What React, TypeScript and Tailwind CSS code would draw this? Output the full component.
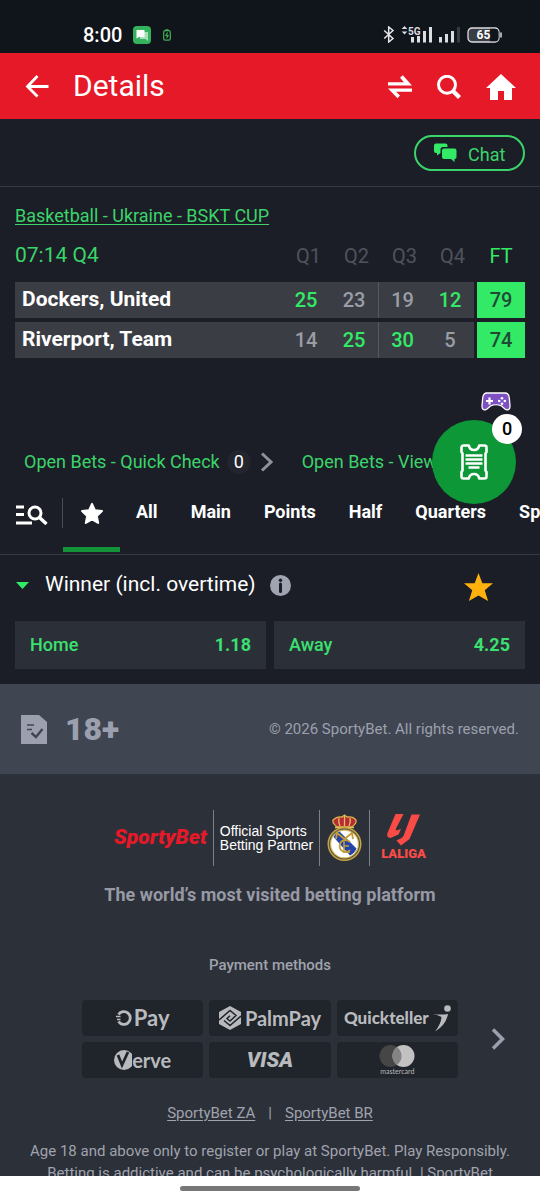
import type { ReactNode } from "react";

interface TeamScore {
  name: string;
  quarters: number[];
  best: boolean[];
  total: number;
}

const QUARTERS = ["Q1", "Q2", "Q3", "Q4"];

const TEAMS: TeamScore[] = [
  { name: "Dockers, United", quarters: [25, 23, 19, 12], best: [true, false, false, true], total: 79 },
  { name: "Riverport, Team", quarters: [14, 25, 30, 5], best: [false, true, true, false], total: 74 },
];

const MARKET_TABS = ["All", "Main", "Points", "Half", "Quarters", "Special"];

const ODDS = [
  { label: "Home", price: "1.18" },
  { label: "Away", price: "4.25" },
];

function StatusBar() {
  return (
    <div className="flex h-[53px] shrink-0 items-center justify-between bg-[#10141b] pt-4 pr-[38px] pl-[83px] text-white">
      <div className="flex items-center">
        <span className="text-xl font-medium">8:00</span>
        <svg className="ml-[11px] size-[18px]" viewBox="0 0 18 18">
          <rect width="18" height="18" rx="4" fill="#35b35c" />
          <path d="M7 6h8v9l-2.500-2H7z" fill="#a9dfb8" />
          <path d="M3.500 4h8v7H6l-2.500 1.500z" fill="#fff" />
        </svg>
        <svg className="ml-3 h-3 w-2" viewBox="0 0 8 12" fill="none" stroke="#43b055" strokeWidth="1.200">
          <path d="M2.500 .8h3" />
          <rect x=".7" y="1.700" width="6.600" height="9.500" rx="1.500" />
          <path d="M4.600 3.500L3 6.500h2L3.600 9" />
        </svg>
      </div>
      <div className="flex items-center">
        <svg className="h-[17px] w-3" viewBox="0 0 12 17" fill="none" stroke="#e6e7ea" strokeWidth="1.500">
          <path d="M1.200 4.500l8.800 8-4.300 3.500V1L10 4.500l-8.800 8" />
        </svg>
        <svg className="ml-[6px] h-[17px] w-[34px]" viewBox="0 0 34 17" fill="#dcdde0">
          <path d="M3.500 0l2.800 3H.700zM3.500 8.500l-2.800-3h5.600z" />
          <text x="7" y="8.500" fontSize="10" fontWeight="700" fontFamily="Roboto, sans-serif">5G</text>
          <rect x="10" y="11" width="3" height="5.500" />
          <rect x="16" y="10" width="3" height="6.500" />
          <rect x="22" y="5" width="3" height="11.500" />
          <rect x="28" y="1" width="3" height="15.500" />
        </svg>
        <svg className="ml-[3px] h-[17px] w-[24px]" viewBox="0 0 24 17" fill="#dcdde0">
          <rect x="1" y="11" width="3" height="5.500" />
          <rect x="7" y="8" width="3" height="8.500" />
          <rect x="13" y="5" width="3" height="11.500" />
          <rect x="19" y="1" width="3" height="15.500" fill="#373b42" />
        </svg>
        <svg className="ml-[5px] h-4 w-[35px]" viewBox="0 0 35 16">
          <rect x="1" y="1" width="31" height="14" rx="4" fill="#3a3d44" stroke="#dcdde0" strokeWidth="1.300" />
          <path d="M23 1.700h5a3.500 3.500 0 013.500 3.500v5.600a3.500 3.500 0 01-3.500 3.500h-5z" fill="#10141b" />
          <path d="M34 5.500v5" stroke="#dcdde0" strokeWidth="1.500" />
          <text x="16.500" y="12.400" fontSize="12" fontWeight="700" textAnchor="middle" fill="#fff" fontFamily="Roboto, sans-serif">65</text>
        </svg>
      </div>
    </div>
  );
}

function Header() {
  return (
    <header className="flex h-[66px] shrink-0 items-center bg-[#e51928] pr-6 pl-[25px] text-white">
      <button type="button" aria-label="Back">
        <svg className="h-6 w-6" viewBox="0 0 24 24" fill="none" stroke="currentColor" strokeWidth="2.800">
          <path d="M23.500 12.500H3M12.500 2L2.500 12.500l10 10" />
        </svg>
      </button>
      <h1 className="ml-6 text-[30px] leading-9">Details</h1>
      <div className="ml-auto flex items-center gap-[25px] pt-px">
        <button type="button" aria-label="Switch">
          <svg className="h-6 w-6" viewBox="0 0 24 24" fill="currentColor">
            <path d="M0 7.200h16l-4-4.400 2.800-2.600L24 10.500H0zM24 13.500H0l9.500 9.700 2.500-2.600-4-3.800h16z" />
          </svg>
        </button>
        <button type="button" aria-label="Search">
          <svg className="h-6 w-6" viewBox="0 0 24 24" fill="none" stroke="currentColor">
            <circle cx="10" cy="9.800" r="8.500" strokeWidth="3" />
            <path d="M15.500 15.500l7 7" strokeWidth="4.200" />
          </svg>
        </button>
        <button type="button" aria-label="Home">
          <svg className="h-[26px] w-[30px]" viewBox="0 0 30 26" fill="currentColor">
            <path d="M15 0L30 14h-4v12h-8v-9h-6v9H4V14H0z" />
          </svg>
        </button>
      </div>
    </header>
  );
}

function ChatBar() {
  return (
    <div className="flex h-[68px] items-center justify-end border-b border-[#353941] px-[15px]">
      <button
        type="button"
        className="flex h-9 w-[111px] items-center rounded-full border-2 border-[#3bd46a] pt-1 pl-[18px] text-lg text-[#3bd46a]"
      >
        <svg className="mr-[11px] mb-1 h-[19px] w-[23px]" viewBox="0 0 23 19" fill="#32ea66">
          <path d="M2 .5h9.500a2 2 0 012 2V4H9a2.500 2.500 0 00-2.500 2.500V10L3 12.500V10H2a2 2 0 01-2-2V2.500a2 2 0 012-2z" />
          <path d="M10 5.500h10.500a2 2 0 012 2V14a2 2 0 01-2 2v3L17 16h-7a2 2 0 01-2-2V7.500a2 2 0 012-2z" />
        </svg>
        Chat
      </button>
    </div>
  );
}

function Scoreboard() {
  return (
    <section className="px-[15px] pt-[15px]">
      <a href="#league" className="block text-lg leading-7 text-[#3bd46a] underline underline-offset-2">
        Basketball - Ukraine - BSKT CUP
      </a>
      <table className="w-full table-fixed border-separate border-spacing-x-0 border-spacing-y-1 text-xl">
        <thead>
          <tr className="h-11 text-[#50535b]">
            <th className="text-left text-[21px] font-normal text-[#3bd46a]">07:14 Q4</th>
            {QUARTERS.map((q) => (
              <th key={q} className="w-12 pl-[5px] font-normal">{q}</th>
            ))}
            <th className="w-[51px] pl-[3px] font-normal text-[#32ea66]">FT</th>
          </tr>
        </thead>
        <tbody>
          {TEAMS.map((team) => (
            <tr key={team.name} className="h-9 text-center font-medium">
              <th className="bg-[#3b3d44] pl-[7px] text-left text-[21px] font-bold text-white">{team.name}</th>
              {team.quarters.map((score, i) => (
                <td
                  key={i}
                  className={`bg-[#3b3d44] ${team.best[i] ? "text-[#32ea66]" : "text-[#9a9da6]"} ${
                    i === 2 ? "border-l border-[#565961]" : ""
                  }`}
                >
                  {score}
                </td>
              ))}
              <td className="border-l-[3px] border-[#1b1e27] bg-[#32ea66] text-[#1f4a35]">{team.total}</td>
            </tr>
          ))}
        </tbody>
      </table>
    </section>
  );
}

function BetslipButton() {
  return (
    <div className="absolute top-[-40px] right-[18px] z-10 flex flex-col items-end">
      <svg className="mr-[11px] h-5 w-[30px]" viewBox="0 0 30 20">
        <path
          d="M6 1h18c3 0 4 2 4.300 5l.7 7.500c.3 4-2.500 5.500-5 3.500l-3.500-3c-3-1.500-8-1.500-11 0L6 17c-2.500 2-5.300.5-5-3.500L1.700 6C2 3 3 1 6 1z"
          fill="#7d50c4"
          stroke="#fff"
          strokeWidth="1.300"
        />
        <path d="M8.500 5.500v7M5 9h7" stroke="#fff" strokeWidth="2.200" />
        <g fill="#fff">
          <circle cx="21" cy="6.200" r="1.300" />
          <circle cx="21" cy="11.800" r="1.300" />
          <circle cx="18.200" cy="9" r="1.300" />
          <circle cx="23.800" cy="9" r="1.300" />
        </g>
      </svg>
      <button
        type="button"
        aria-label="Betslip"
        className="relative mt-2 mr-[6px] flex size-[84px] items-center justify-center rounded-full bg-[#0d9737]"
      >
        <svg className="h-9 w-7" viewBox="0 0 28 36" fill="none" stroke="#fff">
          <path
            d="M3.500 1.500h5.300c.6 3 2.600 4.500 5.200 4.500s4.600-1.500 5.200-4.500h5.300a2 2 0 012 2v4.500l-1 1.500v17l1 1.500v4.500a2 2 0 01-2 2h-5.300c-.6-3-2.600-4.500-5.200-4.500s-4.600 1.500-5.200 4.500H3.500a2 2 0 01-2-2V28l1-1.500v-17L1.500 8V3.500a2 2 0 012-2z"
            strokeWidth="2.600"
            strokeLinejoin="round"
          />
          <path d="M5.500 11.500h17M5.500 15.500h17M5.500 19.500h17M8.500 23.500h11" strokeWidth="2.400" />
        </svg>
        <span className="absolute -top-[6px] -right-[6px] flex size-[30px] items-center justify-center rounded-full bg-white text-lg font-medium text-black">
          0
        </span>
      </button>
    </div>
  );
}

function OpenBets() {
  return (
    <section className="relative mt-[70px]">
      <div className="flex h-[60px] items-center overflow-hidden pl-6 text-lg whitespace-nowrap text-[#3bd46a]">
        <a href="#quick-check">Open Bets - Quick Check</a>
        <span className="ml-[7px] flex size-6 items-center justify-center rounded-full bg-[#22252d] text-white">0</span>
        <svg className="ml-[9px] h-5 w-[14px] shrink-0" viewBox="0 0 14 20" fill="none" stroke="#8f929c" strokeWidth="3">
          <path d="M2 1.500L11 10l-9 8.500" />
        </svg>
        <a href="#open-bets" className="ml-7">Open Bets - View All</a>
      </div>
      <BetslipButton />
    </section>
  );
}

function MarketTabs() {
  return (
    <nav className="flex h-[63px] items-start overflow-hidden border-b border-[#353941] pl-4 text-lg font-bold whitespace-nowrap text-white">
      <button type="button" aria-label="Search markets" className="flex h-[46px] shrink-0 items-center">
        <svg className="h-5 w-8" viewBox="0 0 32 20" fill="none" stroke="currentColor" strokeWidth="3">
          <path d="M0 2h8M0 9.500h8M0 18h16" />
          <circle cx="19" cy="8" r="6" />
          <path d="M23.500 12.500l7 6.500" strokeWidth="3.400" />
        </svg>
      </button>
      <span className="mt-[6px] ml-[14px] h-[30px] w-px shrink-0 bg-[#4a4d55]" />
      <button
        type="button"
        aria-label="Favourites"
        className="flex h-[60px] w-[57px] shrink-0 items-start justify-center border-b-[5px] border-[#12933a] pt-[10px]"
      >
        <svg className="h-6 w-6" viewBox="0 0 24 24" fill="currentColor">
          <path
            d="M12 1.800l3 6.500 7 .8-5.200 4.800 1.400 7L12 17.400l-6.200 3.500 1.400-7L2 9.100l7-.8z"
            stroke="currentColor"
            strokeWidth="2"
            strokeLinejoin="round"
          />
        </svg>
      </button>
      <div className="ml-4 flex gap-[33px]">
        {MARKET_TABS.map((tab) => (
          <button key={tab} type="button" className="h-10 shrink-0">
            {tab}
          </button>
        ))}
      </div>
    </nav>
  );
}

function WinnerMarket() {
  return (
    <section className="px-[15px] pb-[15px]">
      <div className="flex h-[60px] items-center text-[21px] text-white">
        <svg className="mr-4 ml-px h-[7px] w-[13px]" viewBox="0 0 13 7" fill="#32ea66">
          <path d="M0 0h13L6.500 7z" />
        </svg>
        <h2>Winner (incl. overtime)</h2>
        <svg className="ml-[14px] size-[21px]" viewBox="0 0 21 21">
          <circle cx="10.500" cy="10.500" r="10.500" fill="#a0a3b0" />
          <circle cx="10.500" cy="5.300" r="1.700" fill="#1b1e27" />
          <path d="M10.500 9v7.500" stroke="#1b1e27" strokeWidth="3" strokeLinecap="round" />
        </svg>
        <button type="button" aria-label="Add to favourites" className="mt-1 mr-8 ml-auto">
          <svg className="size-[29px]" viewBox="0 0 28 28" fill="#ffb20d">
            <path d="M14 0l3.700 9.800L28 10l-8 6.700L23.300 27 14 21.700 4.700 27 8 16.700 0 10l10.300-.2z" />
          </svg>
        </button>
      </div>
      <div className="mt-[6px] grid grid-cols-2 gap-2">
        {ODDS.map((odd) => (
          <button
            key={odd.label}
            type="button"
            className="flex h-12 items-center justify-between bg-[#2b2f38] px-[15px] text-lg font-medium text-[#3be070]"
          >
            <span>{odd.label}</span>
            <span className="font-bold">{odd.price}</span>
          </button>
        ))}
      </div>
    </section>
  );
}

function AgeNotice() {
  return (
    <div className="flex h-[90px] items-center bg-[#404552] px-[21px] text-[#9ca0ae]">
      <svg className="h-[29px] w-[26px]" viewBox="0 0 26 29" fill="currentColor">
        <path d="M0 0h18l8 7v22H0z" />
        <path d="M6 10h7M6 14.500h5" stroke="#404552" strokeWidth="1.500" />
        <path d="M10.500 18l4.500 4 6.500-8" fill="none" stroke="#404552" strokeWidth="2.400" />
      </svg>
      <span className="ml-[18px] text-[32px] leading-10 font-black">18+</span>
      <span className="ml-auto text-[15px]">© 2026 SportyBet. All rights reserved.</span>
    </div>
  );
}

function ClubCrest() {
  return (
    <svg className="mx-[7px] h-[48px] w-[35px]" viewBox="0 0 35 48">
      <path d="M10 13Q5 9 6 6q4-4 9-3l2.500-2L20 3q6-1 9 3 1 3-4 7z" fill="#b82a36" stroke="#d8b34a" strokeWidth="1.300" />
      <path d="M17.500 1v11M12 4q-1 4 1 8M23 4q1 4-1 8M8 13.500h19" stroke="#e1c15c" strokeWidth="1.300" fill="none" />
      <circle cx="17.500" cy="30" r="17" fill="#c9a544" />
      <circle cx="17.500" cy="30" r="15.500" fill="#51503e" />
      <circle cx="17.500" cy="30" r="14.500" fill="#d5b75d" />
      <circle cx="17.500" cy="30" r="13.300" fill="#fff" />
      <path d="M6.500 23q2-4 6-5.500l17 17q-2 5-6.500 7z" fill="#2444ac" />
      <g fill="none" stroke="#c39e36" strokeWidth="1.800">
        <path d="M9 25l1-6 7.500 6 7.500-6 1 6" />
        <path d="M23 28a6 6 0 100 8" />
        <path d="M17 27v11M17 32h5M16 38h7" strokeWidth="1.500" />
      </g>
    </svg>
  );
}

function PartnerLogos() {
  return (
    <div className="flex h-14 items-stretch justify-center *:flex *:items-center">
      <div className="pr-[6px] text-[21px] font-black text-[#e51928] italic">SportyBet</div>
      <p className="border-l border-[#7d8089] px-[6px] text-left font-['Liberation_Sans',sans-serif] text-sm leading-[14px] text-white">
        Official Sports
        <br />
        Betting Partner
      </p>
      <div className="border-l border-[#7d8089]">
        <ClubCrest />
      </div>
      <div className="flex-col border-l border-[#7d8089] pt-1 pl-[11px]">
        <svg className="h-8 w-9" viewBox="0 0 36 32" fill="#fb4b46">
          <path d="M9.500 0h8L10 14.500q-.8 2.200 1 1.800l4-1.300-2.500 5.500-8 3.500Q0 23.500 1.500 19z" />
          <path d="M25.500 .500h8.500L23.500 25l-8.500 6.500-4.500-5 5-2.500q1.500-.800 2.200-2.500z" />
        </svg>
        <span className="text-[13px] leading-4 font-black text-[#fb4b46]">LALIGA</span>
      </div>
    </div>
  );
}

function PaymentCard({ children }: { children: ReactNode }) {
  return (
    <div className="flex h-9 items-center justify-center rounded-sm bg-[#20242b] font-['Lato','Roboto',sans-serif] text-[#b9babd]">
      {children}
    </div>
  );
}

function PaymentMethods() {
  return (
    <div className="flex items-center pr-[33px] pl-[82px]">
      <div className="grid flex-1 grid-cols-3 gap-[6px]">
        <PaymentCard>
          <svg className="mr-[2px] h-4 w-4" viewBox="0 0 16 16" fill="none" stroke="currentColor" strokeWidth="2.800">
            <path d="M2.500 4.500a6.400 6.400 0 110 7" />
            <path d="M0 6.500h4.500M1 9.500h3.500" strokeWidth="1.500" />
          </svg>
          <span className="text-[22px] leading-6 font-bold">Pay</span>
        </PaymentCard>
        <PaymentCard>
          <svg className="mr-1 h-6 w-[22px] shrink-0" viewBox="0 0 22 24">
            <path d="M11 0l11 6v12l-11 6-11-6V6z" fill="currentColor" />
            <path d="M0 14L11 4.500l6 5-6 5.500-3-2.500 3-2.700M22 10L11 19.500l-6-5" fill="none" stroke="#20242b" strokeWidth="1.500" />
          </svg>
          <span className="text-xl leading-6 font-bold">PalmPay</span>
        </PaymentCard>
        <PaymentCard>
          <span className="text-[17px] leading-6 font-black">Quickteller</span>
          <svg className="ml-1 h-[27px] w-[18px]" viewBox="0 0 18 27" fill="currentColor">
            <circle cx="14.500" cy="3.500" r="3.300" />
            <path d="M0 9q7 1 15 0-2 11-13 17.500Q8 19 8.500 12 5 10 0 9z" />
          </svg>
        </PaymentCard>
        <PaymentCard>
          <svg className="h-5 w-[18px]" viewBox="0 0 18 20">
            <circle cx="10" cy="10" r="10" fill="currentColor" />
            <path d="M4 5l4 10 6-13" fill="none" stroke="#20242b" strokeWidth="2.800" />
          </svg>
          <span className="text-xl leading-6 font-bold">erve</span>
        </PaymentCard>
        <PaymentCard>
          <span className="font-['Roboto',sans-serif] text-[21px] leading-6 font-black italic">VISA</span>
        </PaymentCard>
        <PaymentCard>
          <div className="flex flex-col items-center">
            <svg className="h-[22px] w-9" viewBox="0 0 36 22">
              <circle cx="11.500" cy="11" r="11" fill="#464646" />
              <circle cx="24.500" cy="11" r="11" fill="#c2c2c2" />
              <path d="M18 2.100a11 11 0 010 17.800 11 11 0 010-17.800z" fill="#848484" />
            </svg>
            <span className="text-[7px] leading-2">mastercard</span>
          </div>
        </PaymentCard>
      </div>
      <button type="button" aria-label="More payment methods" className="ml-[33px]">
        <svg className="h-[22px] w-4" viewBox="0 0 16 22" fill="none" stroke="#9ca0ae" strokeWidth="3.500">
          <path d="M2 1.500l9.500 9.500L2 20.500" />
        </svg>
      </button>
    </div>
  );
}

function Footer() {
  return (
    <footer className="bg-[#2c3039] pt-9 text-center text-[#a0a3ae]">
      <PartnerLogos />
      <p className="mt-[17px] text-lg leading-6 font-bold text-[#9799a5]">The world’s most visited betting platform</p>
      <h3 className="mt-[46px] mb-[23px] text-[15px] leading-6 font-medium">Payment methods</h3>
      <PaymentMethods />
      <div className="mt-[23px] flex justify-center gap-[13px] text-[15px] leading-6">
        <a href="#za" className="underline underline-offset-2">SportyBet ZA</a>
        <span>|</span>
        <a href="#br" className="underline underline-offset-2">SportyBet BR</a>
      </div>
      <p className="mt-[15px] px-6 text-[15px] leading-[22px]">
        Age 18 and above only to register or play at SportyBet. Play Responsibly. Betting is addictive and can be
        psychologically harmful. | SportyBet
      </p>
    </footer>
  );
}

export default function App() {
  return (
    <div className="flex h-screen flex-col bg-[#1b1e27] font-['Roboto',sans-serif]">
      <StatusBar />
      <Header />
      <main className="min-h-0 flex-1 overflow-hidden">
        <ChatBar />
        <Scoreboard />
        <OpenBets />
        <MarketTabs />
        <WinnerMarket />
        <AgeNotice />
        <Footer />
      </main>
      <div className="flex h-6 shrink-0 items-center justify-center bg-white">
        <span className="h-[5px] w-[180px] rounded-full bg-[#777]" />
      </div>
    </div>
  );
}
